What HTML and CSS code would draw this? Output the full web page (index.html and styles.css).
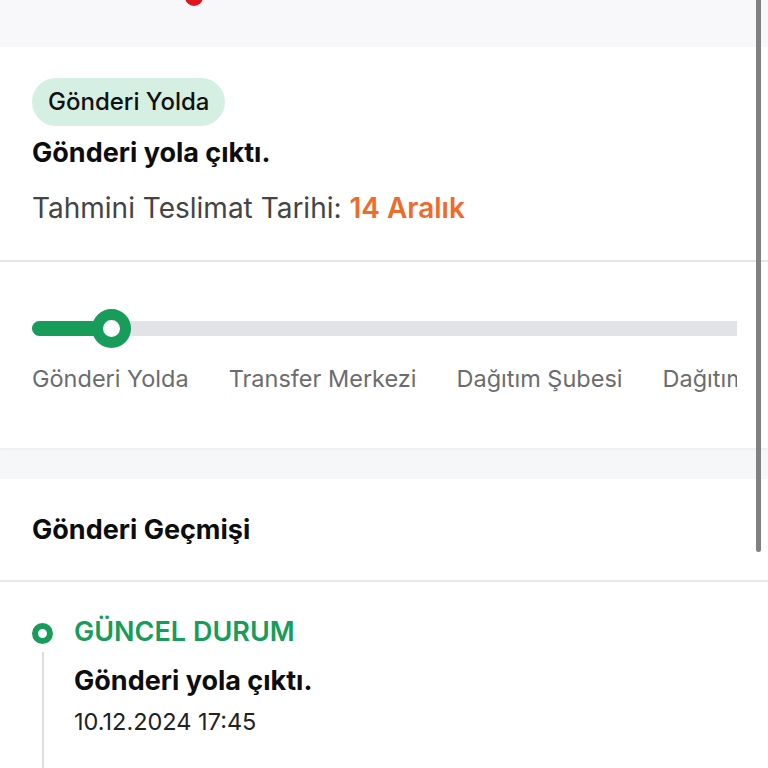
FILE: index.html
```html
<!DOCTYPE html>
<html lang="tr">
<head>
  <meta charset="UTF-8" />
  <title>Gönderi Takibi</title>
  <link rel="stylesheet" href="styles.css">
</head>
<body>

  <!-- üst şerit -->
  <div class="topbar">
    <span class="pin"></span>
  </div>

  <!-- durum özeti -->
  <section class="summary">
    <span class="badge">Gönderi Yolda</span>
    <h2 class="summary-title">Gönderi yola çıktı.</h2>
    <p class="eta">Tahmini Teslimat Tarihi: <span class="eta-date">14 Aralık</span></p>
  </section>

  <!-- ilerleme çubuğu -->
  <section class="progress">
    <div class="track">
      <div class="track-fill"></div>
      <span class="knob"></span>
    </div>
    <div class="steps">
      <span>Gönderi Yolda</span>
      <span>Transfer Merkezi</span>
      <span>Dağıtım Şubesi</span>
      <span>Dağıtıma Çıktı</span>
      <span>Teslim Edildi</span>
    </div>
  </section>

  <div class="spacer"></div>

  <!-- geçmiş -->
  <section class="history">
    <h3 class="history-title">Gönderi Geçmişi</h3>
  </section>

  <div class="timeline">
    <div class="event">
      <div class="event-mark">
        <span class="ring"></span>
        <span class="line"></span>
      </div>
      <div class="event-body">
        <div class="event-label">GÜNCEL DURUM</div>
        <div class="event-text">Gönderi yola çıktı.</div>
        <div class="event-date">10.12.2024 17:45</div>
      </div>
    </div>
  </div>

  <div class="scroll-thumb"></div>

</body>
</html>
```

FILE: styles.css
```css
* {
  margin: 0;
  padding: 0;
  box-sizing: border-box;
}
body {
  font-family: Inter, "Noto Sans", sans-serif;
  background: #fff;
  color: #0d0d0d;
  width: 768px;
  height: 768px;
  overflow: hidden;
  position: relative;
}

/* üst şerit */
.topbar {
  display: flex;
  height: 47px;
  background: #f8f8fa;
  padding-left: 185px;
}
.pin {
  display: block;
  width: 18px;
  height: 18px;
  margin-top: -12px;
  border-radius: 50%;
  background: #e0141e;
}

/* durum özeti */
.summary {
  padding: 31px 32px 0;
  height: 215px;
  border-bottom: 2px solid #e7e7e9;
}
.badge {
  display: inline-block;
  height: 48px;
  line-height: 48px;
  padding: 0 16px;
  border-radius: 24px;
  background: #d5efe2;
  font-size: 24px;
  font-weight: 500;
  color: #111;
}
.summary-title {
  margin-top: 10px;
  font-size: 27px;
  line-height: 34px;
  font-weight: 700;
}
.eta {
  margin-top: 21px;
  font-size: 28px;
  line-height: 34px;
  color: #444;
}
.eta-date {
  color: #f06a2b;
  font-weight: 600;
}

/* ilerleme çubuğu */
.progress {
  padding: 59px 31px 0 32px;
  height: 186px;
  box-shadow: 0 1px 3px rgba(0,0,0,0.05);
  position: relative;
}
.track {
  position: relative;
  height: 15px;
  background: #e1e3e6;
  border-radius: 8px 0 0 8px;
}
.track-fill {
  width: 80px;
  height: 15px;
  background: #179c59;
  border-radius: 8px 0 0 8px;
}
.knob {
  position: absolute;
  left: 60px;
  top: -12px;
  width: 39px;
  height: 39px;
  border-radius: 50%;
  border: 11px solid #179c59;
  background: #fff;
}
.steps {
  display: flex;
  gap: 40px;
  margin-top: 28px;
  overflow: hidden;
  white-space: nowrap;
  font-size: 23.5px;
  line-height: 30px;
  color: #6c6c6e;
}

.spacer {
  height: 31px;
  background: #f6f7f9;
}

/* geçmiş */
.history {
  padding: 34px 32px 0;
  height: 103px;
  border-bottom: 2px solid #e7e7e9;
}
.history-title {
  font-size: 27px;
  line-height: 34px;
  font-weight: 700;
}

.timeline {
  padding: 33px 32px 0;
}
.event {
  display: flex;
  gap: 21px;
}
.event-mark {
  display: flex;
  flex-direction: column;
  align-items: center;
  width: 21px;
  padding-top: 8px;
}
.ring {
  width: 21px;
  height: 21px;
  border-radius: 50%;
  border: 6px solid #179c59;
}
.line {
  width: 2px;
  height: 140px;
  margin-top: 8px;
  background: #dedede;
}
.event-label {
  font-size: 27px;
  line-height: 34px;
  font-weight: 600;
  color: #179c59;
}
.event-text {
  margin-top: 15px;
  font-size: 27px;
  line-height: 34px;
  font-weight: 700;
}
.event-date {
  margin-top: 9px;
  font-size: 23.5px;
  line-height: 30px;
  color: #222;
}

/* kaydırma çubuğu */
.scroll-thumb {
  position: absolute;
  top: 0;
  right: 7px;
  width: 5px;
  height: 552px;
  border-radius: 0 0 3px 3px;
  background: #808080;
}
```
